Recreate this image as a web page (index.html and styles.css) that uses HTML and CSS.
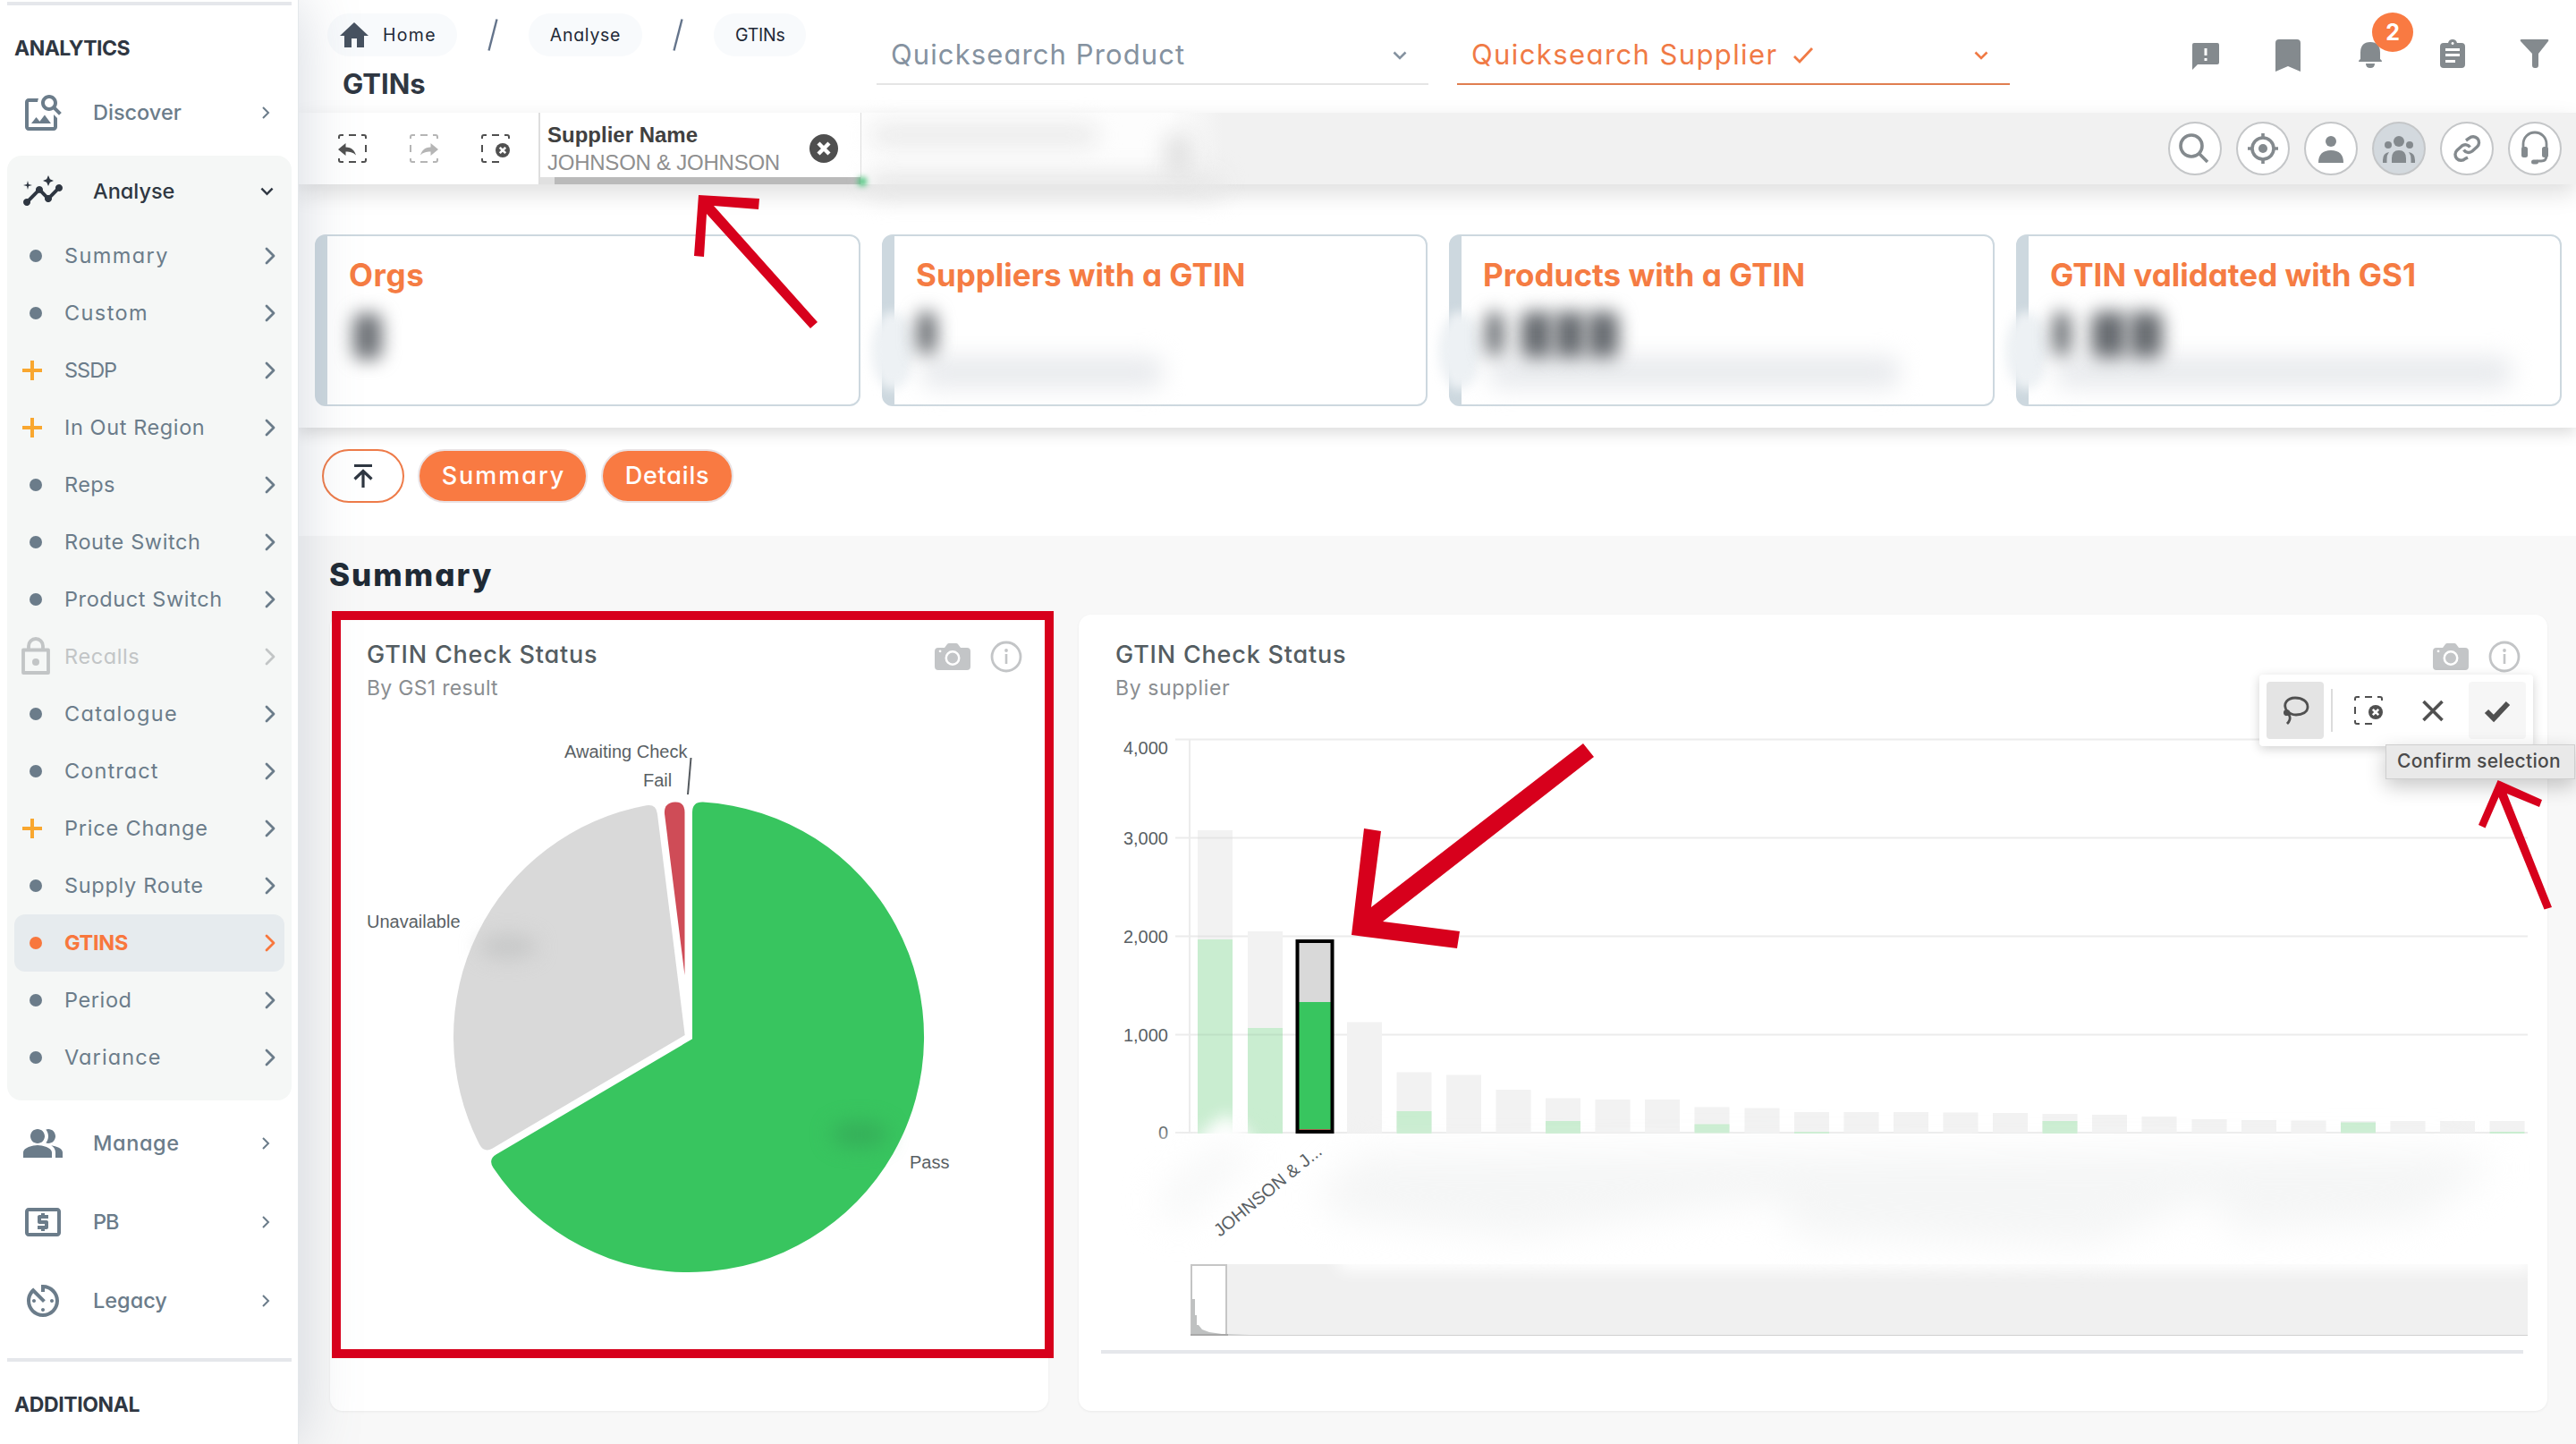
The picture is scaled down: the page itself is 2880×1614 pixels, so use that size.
FILE: index.html
```html
<!DOCTYPE html>
<html lang="en">
<head>
<meta charset="utf-8">
<title>GTINs</title>
<link rel="stylesheet" href="styles.css">
</head>
<body>
<svg class="defs" width="0" height="0">
  <symbol id="chev" viewBox="0 0 12 20"><path d="M2 2l8 8-8 8" fill="none" stroke="currentColor" stroke-width="2.8" stroke-linecap="round" stroke-linejoin="round"/></symbol>
  <symbol id="chev-s" viewBox="0 0 12 20"><path d="M3 4l6 6-6 6" fill="none" stroke="currentColor" stroke-width="2"/></symbol>
  <symbol id="down" viewBox="0 0 16 10"><path d="M1.5 1.5L8 8l6.500-6.500" fill="none" stroke="currentColor" stroke-width="2.600"/></symbol>
  <symbol id="camera" viewBox="0 0 40 30"><path fill="currentColor" fill-rule="evenodd" d="M4 5h7l3-4q.7-1 2-1h8q1.300 0 2 1l3 4h7q4 0 4 4v17q0 4-4 4H4q-4 0-4-4V9q0-4 4-4zM20 8a8.500 8.500 0 1 0 0 17a8.500 8.500 0 1 0 0-17zM20 10.500a6 6 0 1 1 0 12a6 6 0 1 1 0-12zM6 7.500a1.400 1.400 0 1 0 .1 0z"/></symbol>
  <symbol id="info" viewBox="0 0 36 36"><circle cx="18" cy="18" r="16" fill="none" stroke="currentColor" stroke-width="2.800"/><circle cx="18" cy="11" r="1.900" fill="currentColor"/><path d="M18 15v11" stroke="currentColor" stroke-width="2.600"/></symbol>
  <symbol id="frame" viewBox="0 0 32 32"><path d="M1 5V3q0-2 2-2h3M12 1h8M26 1h3q2 0 2 2v2M1 12v8M31 12v8M1 27v2q0 2 2 2h3M12 31h8M26 31h3q2 0 2-2v-2" fill="none" stroke="currentColor" stroke-width="2"/></symbol>
  <symbol id="clear-sel" viewBox="0 0 32 32"><path d="M1 5V3q0-2 2-2h3M12 1h8M26 1h3q2 0 2 2v2M1 12v8M1 27v2q0 2 2 2h3M12 31h8" fill="none" stroke="currentColor" stroke-width="2"/><circle cx="24" cy="18" r="8" fill="currentColor"/><path d="M20.800 14.800l6.400 6.400M27.200 14.800l-6.400 6.400" stroke="#fff" stroke-width="2.600"/></symbol>
</svg>

<aside class="sidebar">
  <div class="rule"></div>
  <h2 class="side-title"><span class="t-n5">ANALYTICS</span></h2>
  <a class="nav"><svg viewBox="0 0 24 24"><path d="M18 13v7H4V6h5.020c.05-.71.22-1.380.48-2H4c-1.100 0-2 .9-2 2v14c0 1.100.9 2 2 2h14c1.100 0 2-.9 2-2v-5l-2-2zm-1.500 5h-11l2.750-3.530 1.960 2.360 2.750-3.540zm2.800-9.110c.44-.7.7-1.510.7-2.390C20 4.010 17.990 2 15.500 2S11 4.010 11 6.500s2.010 4.500 4.490 4.500c.88 0 1.700-.26 2.390-.7L21 13.420 22.420 12 19.300 8.890zM15.500 9C14.120 9 13 7.880 13 6.500S14.120 4 15.500 4 18 5.120 18 6.500 16.880 9 15.500 9z"/></svg><span>Discover</span><svg class="go"><use href="#chev-s"/></svg></a>
  <div class="group">
    <a class="nav open"><svg viewBox="0 0 24 24"><path d="M21 8c-1.450 0-2.260 1.440-1.930 2.510l-3.550 3.560c-.3-.09-.74-.09-1.040 0l-2.550-2.550C12.270 10.450 11.460 9 10 9c-1.450 0-2.270 1.440-1.930 2.520l-4.560 4.550C2.440 15.740 1 16.550 1 18c0 1.100.9 2 2 2 1.450 0 2.260-1.440 1.930-2.510l4.550-4.560c.3.09.74.09 1.040 0l2.550 2.550C12.730 16.550 13.540 18 15 18c1.450 0 2.270-1.440 1.930-2.520l3.560-3.550C21.560 12.260 23 11.450 23 10c0-1.100-.9-2-2-2zM15 9l.94-2.070L18 6l-2.060-.93L15 3l-.92 2.070L12 6l2.080.93zM3.500 11L4 9l2-.5L4 8l-.5-2L3 8l-2 .5L3 9z"/></svg><span>Analyse</span><svg class="go down"><use href="#down"/></svg></a>
    <a class="sub"><i class="dot"></i><span class="t-14">Summary</span><svg class="go"><use href="#chev"/></svg></a>
    <a class="sub"><i class="dot"></i><span class="t-14">Custom</span><svg class="go"><use href="#chev"/></svg></a>
    <a class="sub"><i class="plus"></i><span class="t-n10">SSDP</span><svg class="go"><use href="#chev"/></svg></a>
    <a class="sub"><i class="plus"></i><span class="t-6">In Out Region</span><svg class="go"><use href="#chev"/></svg></a>
    <a class="sub"><i class="dot"></i><span class="t-4">Reps</span><svg class="go"><use href="#chev"/></svg></a>
    <a class="sub"><i class="dot"></i><span class="t-6">Route Switch</span><svg class="go"><use href="#chev"/></svg></a>
    <a class="sub"><i class="dot"></i><span class="t-6">Product Switch</span><svg class="go"><use href="#chev"/></svg></a>
    <a class="sub locked"><svg class="lock" viewBox="0 0 32 42"><path d="M2 14.500h28v25.500H2zM8 14V10a8 8 0 0 1 16 0v4" fill="none" stroke="currentColor" stroke-width="3.800" stroke-linejoin="round"/><circle cx="16" cy="28" r="4" fill="currentColor"/></svg><span class="t-6">Recalls</span><svg class="go"><use href="#chev"/></svg></a>
    <a class="sub"><i class="dot"></i><span class="t-13">Catalogue</span><svg class="go"><use href="#chev"/></svg></a>
    <a class="sub"><i class="dot"></i><span class="t-11">Contract</span><svg class="go"><use href="#chev"/></svg></a>
    <a class="sub"><i class="plus"></i><span class="t-8">Price Change</span><svg class="go"><use href="#chev"/></svg></a>
    <a class="sub"><i class="dot"></i><span class="t-7">Supply Route</span><svg class="go"><use href="#chev"/></svg></a>
    <a class="sub current"><i class="dot"></i><span class="t-n3">GTINS</span><svg class="go"><use href="#chev"/></svg></a>
    <a class="sub"><i class="dot"></i><span class="t-6">Period</span><svg class="go"><use href="#chev"/></svg></a>
    <a class="sub"><i class="dot"></i><span class="t-11">Variance</span><svg class="go"><use href="#chev"/></svg></a>
  </div>
  <a class="nav"><svg viewBox="0 0 24 24"><path d="M16.670 13.130C18.040 14.060 19 15.320 19 17v3h4v-3c0-2.180-3.570-3.470-6.330-3.870zM15 12c2.210 0 4-1.790 4-4s-1.790-4-4-4c-.47 0-.91.1-1.330.24C14.500 5.270 15 6.580 15 8s-.5 2.730-1.330 3.760c.42.14.86.24 1.330.24zM9 12c2.210 0 4-1.790 4-4s-1.790-4-4-4-4 1.790-4 4 1.790 4 4 4zm0 1c-2.670 0-8 1.340-8 4v3h16v-3c0-2.660-5.330-4-8-4z"/></svg><span class="t-6">Manage</span><svg class="go"><use href="#chev-s"/></svg></a>
  <a class="nav"><svg viewBox="0 0 24 24"><path d="M11 17h2v-1h1c.55 0 1-.45 1-1v-3c0-.55-.45-1-1-1h-3v-1h4V8h-2V7h-2v1h-1c-.55 0-1 .45-1 1v3c0 .55.45 1 1 1h3v1H9v2h2v1zm9-13H4c-1.110 0-1.990.89-1.990 2L2 18c0 1.110.89 2 2 2h16c1.110 0 2-.89 2-2V6c0-1.110-.89-2-2-2zm0 14H4V6h16v12z"/></svg><span class="t-n10">PB</span><svg class="go"><use href="#chev-s"/></svg></a>
  <a class="nav"><svg viewBox="0 0 24 24"><path d="M11 17c0 .55.45 1 1 1s1-.45 1-1-.45-1-1-1-1 .45-1 1zm0-14v4h2V5.080c3.390.49 6 3.390 6 6.920 0 3.870-3.130 7-7 7s-7-3.130-7-7c0-1.680.59-3.220 1.580-4.420L12 13l1.410-1.410-6.800-6.800v.02C4.420 6.450 3 9.050 3 12c0 4.970 4.020 9 9 9 4.970 0 9-4.030 9-9s-4.030-9-9-9h-1zm7 9c0-.55-.45-1-1-1s-1 .45-1 1 .45 1 1 1 1-.45 1-1zM6 12c0 .55.45 1 1 1s1-.45 1-1-.45-1-1-1-1 .45-1 1z"/></svg><span>Legacy</span><svg class="go"><use href="#chev-s"/></svg></a>
  <div class="rule low"></div>
  <h2 class="side-title"><span class="t-n4">ADDITIONAL</span></h2>
</aside>

<main class="main">
  <header class="header">
    <div class="lead">
      <nav class="crumbs">
        <a class="crumb home"><svg viewBox="0 0 32 28"><path fill="currentColor" d="M16 0L32 15H27V28H19V18H13V28H5V15H0z"/></svg><span class="t-13">Home</span></a>
        <svg class="slash" viewBox="0 0 12 36"><path d="M10.500 .5L1.500 35.500" stroke="currentColor" stroke-width="2.400"/></svg>
        <a class="crumb"><span class="t-7">Analyse</span></a>
        <svg class="slash" viewBox="0 0 12 36"><path d="M10.500 .5L1.500 35.500" stroke="currentColor" stroke-width="2.400"/></svg>
        <a class="crumb"><span class="t-n3">GTINs</span></a>
      </nav>
      <h1 class="title">GTINs</h1>
    </div>
    <div class="search"><span class="t-11">Quicksearch Product</span><svg class="drop"><use href="#down"/></svg></div>
    <div class="search picked"><span class="t-14">Quicksearch Supplier</span><svg class="tick" viewBox="0 0 24 20"><path d="M2 11l6 6L22 2" fill="none" stroke="currentColor" stroke-width="2.800"/></svg><svg class="drop"><use href="#down"/></svg></div>
    <div class="tools">
      <svg viewBox="0 0 92 80"><path fill="currentColor" fill-rule="evenodd" d="M33 26h26q2 0 2 2v20q0 2-2 2H37l-6 6V28q0-2 2-2zM44.500 32v8h3v-8zM44.500 43v3h3v-3z"/></svg>
      <svg viewBox="0 0 92 80"><path fill="currentColor" d="M36 22h20q4 0 4 4v32l-14-6-14 6V26q0-4 4-4z"/></svg>
      <div class="bell"><svg viewBox="0 0 92 80"><path fill="currentColor" d="M46 25q11 0 11 12v7q2 1 2 3H33q0-2 2-3v-7q0-12 11-12zM41 49h10q0 5-5 5t-5-5z"/></svg><b class="badge">2</b></div>
      <svg viewBox="0 0 92 80"><path fill="currentColor" fill-rule="evenodd" d="M36 26h5q1-4 5-4t5 4h5q4 0 4 4v20q0 4-4 4H36q-4 0-4-4V30q0-4 4-4zM46 25a1.500 1.500 0 1 0 .1 0zM38 32v3h16v-3zM38 38v3h16v-3zM38 45v3h11v-3z"/></svg>
      <svg viewBox="0 0 92 80"><path fill="currentColor" d="M31 22h29q2 0 1 2L50 38v13q0 3-3 3h-1q-3 0-3-3V38L30 24q-1-2 1-2z"/></svg>
    </div>
  </header>

  <div class="selections">
    <div class="sel-tools">
      <svg viewBox="0 0 32 32"><use href="#frame"/><path fill="#fff" d="M-1 9h4v13h-4z"/><path fill="currentColor" d="M0 17l8.500-7v4.500c7 0 10 4 11.500 9-3-3-6-4-11.500-4V24z"/></svg>
      <svg class="off" viewBox="0 0 32 32"><use href="#frame"/><path fill="#fff" d="M29 9h4v13h-4z"/><path fill="currentColor" d="M32 17l-8.500-7v4.500c-7 0-10 4-11.500 9 3-3 6-4 11.500-4V24z"/></svg>
      <svg viewBox="0 0 32 32"><use href="#clear-sel"/></svg>
    </div>
    <div class="sel-field">
      <div class="sel-text"><b>Supplier Name</b><span class="t-n2">JOHNSON &amp; JOHNSON</span></div>
      <svg class="sel-x" viewBox="0 0 32 32"><circle cx="16" cy="16" r="16" fill="#4f4f4f"/><path d="M10 10l12 12M22 10L10 22" stroke="#fff" stroke-width="4.400"/></svg>
      <div class="sel-bar"></div>
    </div>
    <div class="sel-hidden"><i class="smear a"></i><i class="smear b"></i><i class="smear c"></i><i class="smear d"></i></div>
    <div class="rounds">
      <div class="round"><svg viewBox="-30 -30 60 60"><circle cx="-4" cy="-3" r="12"/><path d="M5 6l9 9"/></svg></div>
      <div class="round"><svg viewBox="-30 -30 60 60"><circle r="12"/><circle class="fill" r="5"/><path d="M0-17v5M0 12v5M-17 0h5M12 0h5"/></svg></div>
      <div class="round"><svg viewBox="-30 -30 60 60"><circle class="fill" cy="-8" r="6"/><path class="fill" d="M-14 16q0-14 14-14t14 14z"/></svg></div>
      <div class="round on"><svg viewBox="-30 -30 60 60"><circle class="fill" cy="-8" r="6"/><circle class="fill" cx="-12" cy="-4" r="4"/><circle class="fill" cx="12" cy="-4" r="4"/><path class="fill" d="M-8 16V11q0-9 8-9t8 9v5zM-18 16v-3q0-8 7-9-2.500 3-2.500 8v4zM18 16v-3q0-8-7-9 2.500 3 2.500 8v4z"/></svg></div>
      <div class="round"><svg viewBox="-30 -30 60 60"><path d="M-1-9l3.500-2.500a6.500 6.500 0 0 1 9 9.500l-5.500 5a6.500 6.500 0 0 1-9.500-1.500M1 10l-3 1.500a6.500 6.500 0 0 1-9-9.500l5.500-5a6.500 6.500 0 0 1 9 1.500" stroke-width="3.400"/></svg></div>
      <div class="round"><svg viewBox="-30 -30 60 60"><path d="M-13 0v-5a13 13 0 0 1 26 0V8q0 6-6 6H2" stroke-width="2.800"/><rect class="fill" x="-15" y="-2" width="7" height="12" rx="2.500"/><rect class="fill" x="8" y="-2" width="7" height="12" rx="2.500"/><rect class="fill" x="-4" y="12.500" width="8" height="5" rx="2.500"/></svg></div>
    </div>
  </div>

  <section class="kpis">
    <article class="kpi"><h3 class="t-6">Orgs</h3><i class="ink o1"></i></article>
    <article class="kpi"><i class="edge"></i><h3>Suppliers with a GTIN</h3><i class="haze h1"></i><i class="ink s1"></i></article>
    <article class="kpi"><i class="edge"></i><h3>Products with a GTIN</h3><i class="haze h2"></i><i class="ink p1"></i><i class="ink p2"></i><i class="ink p3"></i><i class="ink p4"></i></article>
    <article class="kpi"><i class="edge"></i><h3>GTIN validated with GS1</h3><i class="haze h3"></i><i class="ink p1"></i><i class="ink v2"></i><i class="ink v3"></i></article>
  </section>

  <nav class="jumps">
    <a class="jump top"><svg viewBox="0 0 22 26"><path d="M1 1.500h20M11 26V8M1.500 16.500L11 7.500l9.500 9" fill="none" stroke="currentColor" stroke-width="3.200"/></svg></a>
    <a class="jump solid w1"><span class="t-19">Summary</span></a>
    <a class="jump solid w2"><span class="t-8">Details</span></a>
  </nav>

  <section class="content">
    <h2 class="section-title"><span class="t-19">Summary</span></h2>
    <div class="cards">
      <article class="card">
        <div class="card-head"><div><h4 class="t-8">GTIN Check Status</h4><p class="t-3">By GS1 result</p></div><div class="card-icons"><svg class="cam"><use href="#camera"/></svg><svg class="inf"><use href="#info"/></svg></div></div>
        <svg class="plot" viewBox="369 784 803 793">
          <path fill="#d9d9d9" d="M765.700 1156.900L550.800 1283.400Q541.400 1289 536.100 1279.200A263 263 0 0 1 722.500 900.300Q733.500 898.500 734.900 909.400Z"/>
          <path fill="#cf4c57" d="M765.500 1090L743.100 910.400Q741.500 897.500 754.500 896.500Q765.500 896 765.500 908Z"/>
          <path fill="#38c55f" d="M774 1161.300L774 908Q774 896 786 896.500A263 263 0 1 1 551.500 1305.300Q545.400 1295.900 554.900 1290.300Z"/>
          <ellipse class="soft" cx="568" cy="1058" rx="32" ry="13" fill="#c6c7c7"/>
          <ellipse class="soft" cx="961" cy="1268" rx="32" ry="14" fill="#35ae59"/>
          <path d="M772.500 847L769 888" stroke="#54595e" stroke-width="2"/>
          <g class="labels">
            <text x="631" y="847">Awaiting Check</text>
            <text x="719" y="879">Fail</text>
            <text x="410" y="1037">Unavailable</text>
            <text x="1017" y="1306">Pass</text>
          </g>
        </svg>
      </article>
      <article class="card wide">
        <div class="card-head"><div><h4 class="t-8">GTIN Check Status</h4><p class="t-6">By supplier</p></div><div class="card-icons"><svg class="cam"><use href="#camera"/></svg><svg class="inf"><use href="#info"/></svg></div></div>
        <svg class="plot" viewBox="1206 784 1642 793">
          <path d="M1314 826.500H2826M1314 936.500H2826M1314 1046.500H2826M1314 1156.500H2826M1314 1266H2826M1330 826V1266" stroke="#ececec" stroke-width="2" fill="none"/>
          <path fill="#f2f2f2" d="M1339 928h39v338h-39zM1395 1041h39v225h-39zM1506 1142.500h39v124h-39zM1561.500 1198.500h39v68h-39zM1617 1201.500h39v65h-39zM1672.500 1218h39v48h-39zM1728 1227.500h39v39h-39zM1783.500 1229h39v37h-39zM1839 1229h39v37h-39zM1894.500 1237.500h39v29h-39zM1950.500 1238.500h39v28h-39zM2006 1243h39v23h-39zM2061.500 1243h39v23h-39zM2117 1243h39v23h-39zM2172.500 1243.500h39v23h-39zM2228 1244h39v22h-39zM2283.500 1245h39v21h-39zM2339 1246h39v20h-39zM2394.500 1248h39v18h-39zM2450.500 1251h39v15h-39zM2506 1252h39v14h-39zM2561.500 1252.500h39v14h-39zM2617 1253h39v13h-39zM2672.500 1253h39v13h-39zM2728 1253h39v13h-39zM2783.500 1253h39v13h-39z"/>
          <path fill="#c9edd0" d="M1339 1050h39v217h-39zM1395 1149h39v118h-39zM1561.500 1242h39v25h-39zM1728 1253h39v14h-39zM1894.500 1256.500h39v10h-39zM2006 1265h39v2h-39zM2283.500 1253h39v14h-39zM2617 1254.500h39v12h-39zM2783.500 1265h39v2h-39z"/>
          <path d="M1378 1046.500h-39M1378 936.500h-39M1378 1156.500h-39M1434 1156.500h-39" stroke="#000" stroke-opacity=".05" stroke-width="2"/>
          <path fill="#d9d9d9" d="M1450 1052h40v70h-40z"/><path fill="#38c55f" d="M1450 1120h40v143h-40z"/><path fill="#a9604f" d="M1450 1262h40v3h-40z"/>
          <rect x="1450.500" y="1052" width="39" height="213" fill="none" stroke="#000" stroke-width="4"/>
          <g class="labels end">
            <text x="1306" y="843">4,000</text><text x="1306" y="944">3,000</text><text x="1306" y="1054">2,000</text><text x="1306" y="1164">1,000</text><text x="1306" y="1273">0</text>
          </g>
          <path d="M1331 1413h1495v80h-1495z" fill="#f0f0f0"/>
          <path d="M1332 1414h39v78h-39z" fill="#fff" stroke="#c6c6c6" stroke-width="2"/>
          <path d="M1332 1431h1v21h3v18h2v11h2l4 5 8 3 14 2 30 1v1h-64z" fill="#bfc1c1"/>
          <path d="M1331 1492.500H2826" stroke="#d0d0d0"/><path d="M1331 1492h42" stroke="#a8a8a8" stroke-width="2"/>
          <path d="M1231 1511H2821" stroke="#e5e7eb" stroke-width="4"/>
          <g class="veil"><path d="M1340 1300l4-34 28-22 22 22 14 44z"/><ellipse cx="1304" cy="1280" rx="16" ry="8"/><path d="M1490 1395H2830V1420H1500z"/></g>
          <g class="cloud">
            <path d="M1295 1340l70-60 40 10-50 40-40 40z"/>
            <path d="M1470 1340l50-50 1230-2 40 16-90 60-200 14-30-40-130 54-330-10-20-40-90 10-200 30-200-20z"/>
          </g>
          <text class="labels" transform="translate(1364 1383) rotate(-39.200)">JOHNSON &amp; J...</text>
        </svg>
      </article>
    </div>
  </section>
</main>

<div class="menu">
  <div class="menu-btn on"><svg viewBox="0 0 32 32"><path d="M7 17C1 8 8 2 16 2s14 4 14 10-6 9-13 9q-6 0-9-4M5 21q4-2 5 2t-3 8" fill="none" stroke="currentColor" stroke-width="2.800"/><circle cx="6.500" cy="18.500" r="3.500" fill="currentColor"/></svg></div>
  <i class="menu-sep"></i>
  <div class="menu-btn"><svg viewBox="0 0 32 32"><use href="#clear-sel"/></svg></div>
  <div class="menu-btn"><svg viewBox="0 0 32 32"><path d="M5.500 6l21 21M26.500 6L5.500 27" stroke="currentColor" stroke-width="3.600"/></svg></div>
  <div class="menu-btn hover"><svg viewBox="0 0 32 32"><path d="M4 17l8 8L28 8" fill="none" stroke="currentColor" stroke-width="6"/></svg></div>
</div>
<div class="tooltip"><span class="t-3">Confirm selection</span></div>

<div class="callout"></div>
<svg class="marks" viewBox="0 0 2880 1614">
  <path d="M781 218L849 222 848 234 798 230 914 360 906 367 790 239 787 287 776 286z"/>
  <path d="M1511 1045L1525 926 1544 929 1533 1014 1770 831 1782 846 1546 1030 1632 1041 1629 1060z"/>
  <path d="M2792.600 872L2842 894 2839 902 2802.700 887 2853 1014 2844.500 1016.500 2793.600 891 2778.600 925.500 2771 922z"/>
</svg>
</body>
</html>
```
FILE: styles.css
```css
* { box-sizing: border-box; margin: 0; padding: 0; }
body {
  width: 2880px; height: 1614px; overflow: hidden; position: relative;
  display: flex; background: #fff;
  font-family: Inter, "Liberation Sans", sans-serif;
  font-feature-settings: "cv11";
  color: #2f3742;
}
svg { display: block; flex: none; overflow: visible; }
.defs { position: absolute; }
h1, h2, h3, h4, span { white-space: nowrap; }

/* tracking steps, in tenths of a pixel */
.t-n10 { letter-spacing: -1px; }
.t-n5 { letter-spacing: -.53px; }
.t-n4 { letter-spacing: -.4px; }
.t-n3 { letter-spacing: -.3px; }
.t-n2 { letter-spacing: -.24px; }
.t-3 { letter-spacing: .3px; }
.t-4 { letter-spacing: .4px; }
.t-6 { letter-spacing: .6px; }
.t-7 { letter-spacing: .7px; }
.t-8 { letter-spacing: .8px; }
.t-11 { letter-spacing: 1.1px; }
.t-13 { letter-spacing: 1.3px; }
.t-14 { letter-spacing: 1.4px; }
.t-19 { letter-spacing: 2px; margin-right: -2px; }

/* sidebar */
.sidebar {
  width: 334px; height: 1614px; flex: none; padding: 2px 8px 0; position: relative; z-index: 3;
  background: #fff; box-shadow: 0 0 64px rgba(100, 116, 139, .28); border-right: 1px solid #e4e8eb;
}
.rule { height: 4px; width: 318px; background: #e5e7eb; }
.rule.low { margin-top: 20px; }
.side-title { height: 76px; padding: 20px 0 0 8px; display: flex; align-items: center; font-size: 23px; font-weight: 700; }
.nav { height: 88px; display: flex; align-items: center; padding-left: 16px; color: #6b7c8a; font-size: 23.500px; font-weight: 500; }
.nav span, .sub span { padding-bottom: 2px; }
.nav > svg:first-child { width: 48px; height: 48px; fill: currentColor; margin-right: 32px; }
.nav .go { width: 12px; height: 20px; margin-left: auto; margin-right: 22px; }
.group { width: 318px; background: #f5f7f6; border-radius: 16px; margin: 4px 0; padding-bottom: 16px; }
.group .nav { height: 80px; color: #2f3742; }
.nav .go.down { width: 15px; height: 10px; margin-right: 20px; }
.sub { height: 64px; margin: 0 8px; display: flex; align-items: center; padding-left: 56px; position: relative; font-size: 23.500px; color: #6b7c8a; border-radius: 12px; }
.sub .go { width: 12px; height: 20px; margin-left: auto; margin-right: 10px; }
.dot { position: absolute; left: 17px; width: 14px; height: 14px; border-radius: 50%; background: currentColor; }
.plus { position: absolute; left: 9px; width: 22px; height: 22px; background: linear-gradient(#f9a72f, #f9a72f) center / 22px 4px no-repeat, linear-gradient(#f9a72f, #f9a72f) center / 4px 22px no-repeat; }
.lock { position: absolute; left: 8px; top: 10px; width: 32px; height: 42px; }
.locked { color: #c2c5c6; }
.current { background: #e6ebee; color: #f8773d; font-weight: 700; }

/* header */
.main { flex: 1; min-width: 0; display: flex; flex-direction: column; }
.header { height: 126px; display: flex; }
.lead { width: 646px; padding: 15px 0 0 32px; }
.crumbs { display: flex; align-items: center; height: 48px; }
.crumb { height: 48px; border-radius: 24px; background: #f8fafc; display: flex; align-items: center; padding: 0 24px; font-size: 19.500px; color: #1f2937; }
.crumb.home { padding: 0 23px 0 14px; gap: 16px; }
.crumb.home svg { width: 32px; height: 28px; color: #475260; }
.slash { width: 12px; height: 36px; margin: 0 34px; color: #64748b; }
.title { height: 62px; padding-left: 17px; line-height: 62px; font-size: 31px; font-weight: 700; }
.search { width: 617px; height: 95px; margin-right: 32px; padding: 30px 24px 0 16px; border-bottom: 2px solid #e5e5e5; display: flex; align-items: center; font-size: 31px; color: #8592a0; }
.search span { padding-bottom: 2px; }
.search.picked { border-color: #e07e50; color: #f07a45; margin-right: 0; width: 618px; }
.search .drop { width: 16px; height: 10px; margin-left: auto; }
.tick { width: 24px; height: 20px; margin-left: 16px; }
.tools { margin-left: auto; display: flex; height: 102px; padding-top: 22px; color: #848a8e; }
.tools svg { width: 92px; height: 80px; }
.bell { position: relative; }
.badge { position: absolute; left: 48px; top: -8px; width: 46px; height: 44px; border-radius: 50%; background: #f97a42; color: #fff; font-size: 25px; line-height: 44px; text-align: center; }

/* selections bar */
.selections { height: 80px; display: flex; position: relative; z-index: 2; background: #f1f1f1; box-shadow: 0 10px 24px rgba(0, 0, 0, .13); }
.sel-tools { width: 270px; padding-left: 44px; display: flex; align-items: center; gap: 48px; background: #fff; border-right: 2px solid #dedede; }
.sel-tools svg { width: 32px; height: 32px; color: #505050; }
.sel-tools .off { color: #b5b5b5; }
.sel-field { width: 359px; background: #fff; position: relative; font-family: "Liberation Sans", Arial, sans-serif; border-right: 1px solid #ddd; display: flex; }
.sel-text { padding: 9px 0 0 8px; display: flex; flex-direction: column; font-size: 24px; line-height: 31px; width: 301px; white-space: nowrap; }
.sel-text b { color: #404040; }
.sel-text span { color: #8f8f8f; }
.sel-x { width: 32px; height: 32px; margin-top: 24px; }
.sel-bar { position: absolute; left: 0; bottom: 0; right: 0; height: 8px; background: linear-gradient(90deg, #e0e0e0 16px, #bababa 16px); }
.sel-hidden { width: 404px; position: relative; background: linear-gradient(90deg, #fdfdfd 85%, #f1f1f1); }
.smear { position: absolute; filter: blur(12px); border-radius: 20px; }
.smear.a { left: 10px; top: 12px; width: 255px; height: 26px; background: #ebebeb; }
.smear.b { left: 6px; top: 66px; width: 400px; height: 30px; background: #e8e8e8; }
.smear.c { left: 340px; top: 22px; width: 28px; height: 50px; background: #dfdfdf; }
.smear.d { left: -4px; top: 72px; width: 10px; height: 10px; background: #3fbf73; filter: blur(3px); }
.rounds { margin-left: auto; display: flex; gap: 16px; align-items: center; padding-right: 16px; }
.round { width: 60px; height: 60px; border-radius: 50%; border: 2px solid #c4c6c8; background: #fff; display: flex; align-items: center; justify-content: center; color: #848a8e; }
.round.on { background: #d3d9de; }
.round svg { width: 60px; height: 60px; fill: none; stroke: currentColor; stroke-width: 3.600; }
.round .fill { fill: currentColor; stroke: none; }

/* kpis */
.kpis { height: 272px; padding: 56px 16px 24px 18px; display: flex; gap: 24px; background: #fff; position: relative; z-index: 1; box-shadow: 0 6px 16px rgba(0, 0, 0, .14); }
.kpi { width: 610px; height: 192px; border: 2px solid #cdd8df; border-left-width: 14px; border-radius: 12px; position: relative; padding: 23px 24px; }
.kpi h3 { font-size: 35px; line-height: 40px; color: #f57c43; font-weight: 700; }
.ink, .haze, .edge { position: absolute; filter: blur(10px); }
.ink { top: 84px; width: 24px; height: 52px; background: #676b70; border-radius: 10px; }
.o1 { left: 29px; top: 86px; width: 32px; background: #6c7075; }
.s1 { left: 25px; top: 84px; width: 22px; height: 48px; }
.p1 { left: 27px; width: 20px; height: 50px; }
.p2 { left: 66px; width: 36px; }
.p3 { left: 103px; width: 36px; }
.p4 { left: 140px; width: 36px; }
.v2 { left: 70px; width: 40px; }
.v3 { left: 112px; width: 38px; }
.haze { left: 30px; top: 134px; height: 36px; background: #e9ebee; border-radius: 14px; filter: blur(13px); }
.h1 { width: 270px; }
.h2 { width: 460px; }
.h3 { width: 510px; }
.edge { left: -26px; top: 84px; width: 48px; height: 88px; border-radius: 50%; background: #edf1f4; filter: blur(6px); }

/* jump buttons */
.jumps { height: 121px; padding: 24px 0 0 26px; display: flex; background: #fff; }
.jump { height: 60px; border-radius: 30px; display: flex; align-items: center; justify-content: center; font-size: 27px; font-weight: 500; }
.jump span { padding-bottom: 2px; }
.jump.top { width: 92px; border: 2px solid #ee7b49; }
.jump.top svg { width: 22px; height: 26px; color: #2f3742; }
.jump.solid { background: #f97a42; color: #fff; border: 2px solid #e9e2e4; }
.w1 { width: 190px; margin-left: 15px; }
.w2 { width: 148px; margin-left: 15px; }

/* content */
.content { flex: 1; background: #f8f8f8; padding-left: 35px; }
.section-title { height: 88px; line-height: 86px; font-size: 35px; font-weight: 800; color: #1f2a35; margin-left: -1px; }
.cards { display: flex; gap: 34px; }
.card { width: 803px; height: 890px; background: #fff; border-radius: 14px; box-shadow: 0 1px 3px rgba(0, 0, 0, .06); overflow: hidden; }
.card.wide { width: 1642px; }
.card-head { height: 97px; padding: 23px 29px 0 41px; display: flex; justify-content: space-between; }
.wide .card-head { padding-right: 30px; }
.card h4 { font-size: 27px; line-height: 44px; font-weight: 500; color: #545d62; }
.card p { font-size: 23px; line-height: 30px; color: #8a8e91; }
.card-icons { display: flex; gap: 22px; color: #c3c5c7; align-items: center; height: 48px; }
.cam { width: 40px; height: 30px; }
.inf { width: 36px; height: 36px; }
.plot { width: 100%; height: 793px; }
.labels { font: 20px "Liberation Sans", Arial, sans-serif; fill: #595f64; }
.end { text-anchor: end; }
.soft { filter: blur(11px); }
.veil { fill: #fff; filter: blur(9px); }
.cloud { fill: #f5f6f6; filter: blur(20px); }

/* chart selection menu */
.menu { position: absolute; left: 2526px; top: 754px; width: 306px; height: 80px; padding: 8px; display: flex; background: #fff; border-radius: 4px; box-shadow: 0 3px 12px rgba(0, 0, 0, .18); }
.menu-btn { width: 64px; height: 64px; border-radius: 4px; display: flex; align-items: center; justify-content: center; color: #505050; }
.menu-btn + .menu-btn { margin-left: 8px; }
.menu-btn svg { width: 32px; height: 32px; }
.menu-btn.on { background: #e4e4e4; }
.menu-btn.hover { background: #f6f6f6; }
.menu-sep { width: 2px; height: 48px; margin: 8px 8px 0 8px; background: #dcdcdc; }
.tooltip { position: absolute; left: 2667px; top: 832px; width: 212px; height: 39px; background: #e9e9e9; border: 1px solid #cfcfcf; box-shadow: 0 8px 22px rgba(0, 0, 0, .22); padding-left: 12px; line-height: 36px; font-size: 21px; font-weight: 500; color: #4a4a4a; font-feature-settings: normal; white-space: nowrap; }

/* annotations */
.callout { position: absolute; z-index: 5; left: 371px; top: 683px; width: 807px; height: 835px; border: 10px solid #d7001c; }
.marks { position: absolute; z-index: 6; left: 0; top: 0; width: 2880px; height: 1614px; fill: #d7001c; }
```
